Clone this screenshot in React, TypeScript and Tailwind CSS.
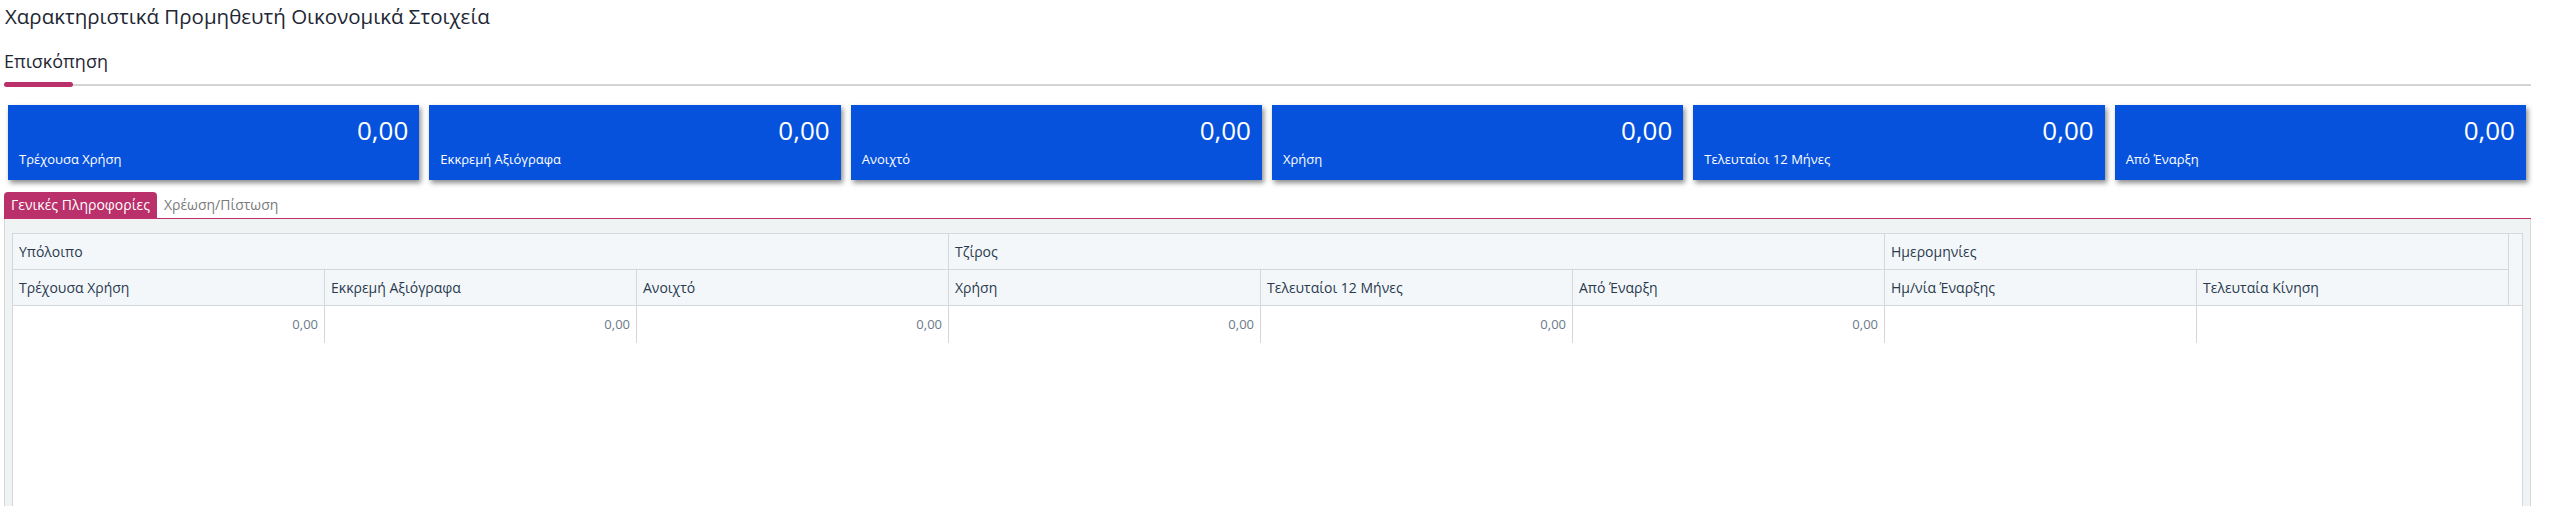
const cards = [
  { label: "Τρέχουσα Χρήση", value: "0,00" },
  { label: "Εκκρεμή Αξιόγραφα", value: "0,00" },
  { label: "Ανοιχτό", value: "0,00" },
  { label: "Χρήση", value: "0,00" },
  { label: "Τελευταίοι 12 Μήνες", value: "0,00" },
  { label: "Από Έναρξη", value: "0,00" },
];

const groups = [
  { label: "Υπόλοιπο", span: 3 },
  { label: "Τζίρος", span: 3 },
  { label: "Ημερομηνίες", span: 2 },
];

const columns = [
  { label: "Τρέχουσα Χρήση", value: "0,00" },
  { label: "Εκκρεμή Αξιόγραφα", value: "0,00" },
  { label: "Ανοιχτό", value: "0,00" },
  { label: "Χρήση", value: "0,00" },
  { label: "Τελευταίοι 12 Μήνες", value: "0,00" },
  { label: "Από Έναρξη", value: "0,00" },
  { label: "Ημ/νία Έναρξης", value: "" },
  { label: "Τελευταία Κίνηση", value: "" },
];

export default function App() {
  return (
    <div className="min-h-screen bg-white pl-[4px] pr-[19px] font-['Open_Sans',sans-serif] text-[#222b36]">
      {/* Header */}
      <h1 className="mt-[2px] pl-[1px] text-[20.5px] leading-[28px] font-normal text-[#1e2733]">
        Χαρακτηριστικά Προμηθευτή Οικονομικά Στοιχεία
      </h1>

      {/* Overview tab */}
      <div className="mt-[19px] text-[18px] leading-[24px] text-[#1e2733]">Επισκόπηση</div>
      <div className="mt-[9px] flex h-[5px] items-center">
        <div className="h-[5px] w-[69px] rounded-full bg-[#b9306a]" />
        <div className="h-[2px] flex-1 bg-[#d4d4d4]" />
      </div>

      {/* Summary cards */}
      <div className="mt-[18px] flex gap-[10px] pl-[4px] pr-[5px]">
        {cards.map((card) => (
          <div
            key={card.label}
            className="flex h-[75px] flex-1 flex-col bg-[#0652dd] px-[11px] pt-[9px] text-white shadow-[2px_3px_5px_rgba(0,0,0,0.45)]"
          >
            <div className="text-right text-[26px] leading-[32px]">{card.value}</div>
            <div className="mt-[5px] text-[13px] leading-[16px]">{card.label}</div>
          </div>
        ))}
      </div>

      {/* Tabs */}
      <div className="mt-[12px] flex items-end border-b border-[#c2306b]">
        <div className="h-[26px] rounded-t-[4px] bg-[#b9306a] px-[7px] text-[14px] leading-[26px] text-white">
          Γενικές Πληροφορίες
        </div>
        <div className="h-[26px] px-[7px] text-[14px] leading-[26px] text-[#7b7b7b]">Χρέωση/Πίστωση</div>
      </div>

      {/* Panel */}
      <div className="h-[288px] border-x border-[#d5d8da] bg-[#f0f3f4] px-[7px] pt-[14px]">
        <div className="h-full border border-b-0 border-[#d5d8da] bg-white">
          <div className="flex bg-[#f3f7fa]">
            <div className="grid flex-1 grid-cols-8">
              {groups.map((g) => (
                <div
                  key={g.label}
                  className={`h-[36px] border-r border-b border-[#d5d8da] px-[6px] text-[14px] leading-[35px] text-[#2a3a4d] ${
                    g.span === 3 ? "col-span-3" : "col-span-2"
                  }`}
                >
                  {g.label}
                </div>
              ))}
              {columns.map((c) => (
                <div
                  key={c.label}
                  className="h-[36px] border-r border-b border-[#d5d8da] px-[6px] text-[14px] leading-[35px] text-[#2a3a4d]"
                >
                  {c.label}
                </div>
              ))}
            </div>
            <div className="w-[13px] border-b border-[#d5d8da]" />
          </div>
          <div className="flex">
            <div className="grid flex-1 grid-cols-8">
              {columns.map((c, i) => (
                <div
                  key={c.label}
                  className={`h-[37px] px-[6px] text-right text-[13px] leading-[37px] text-[#6c7a89] ${
                    i < 7 ? "border-r border-[#d5d8da]" : ""
                  }`}
                >
                  {c.value}
                </div>
              ))}
            </div>
            <div className="w-[13px]" />
          </div>
        </div>
      </div>
    </div>
  );
}
